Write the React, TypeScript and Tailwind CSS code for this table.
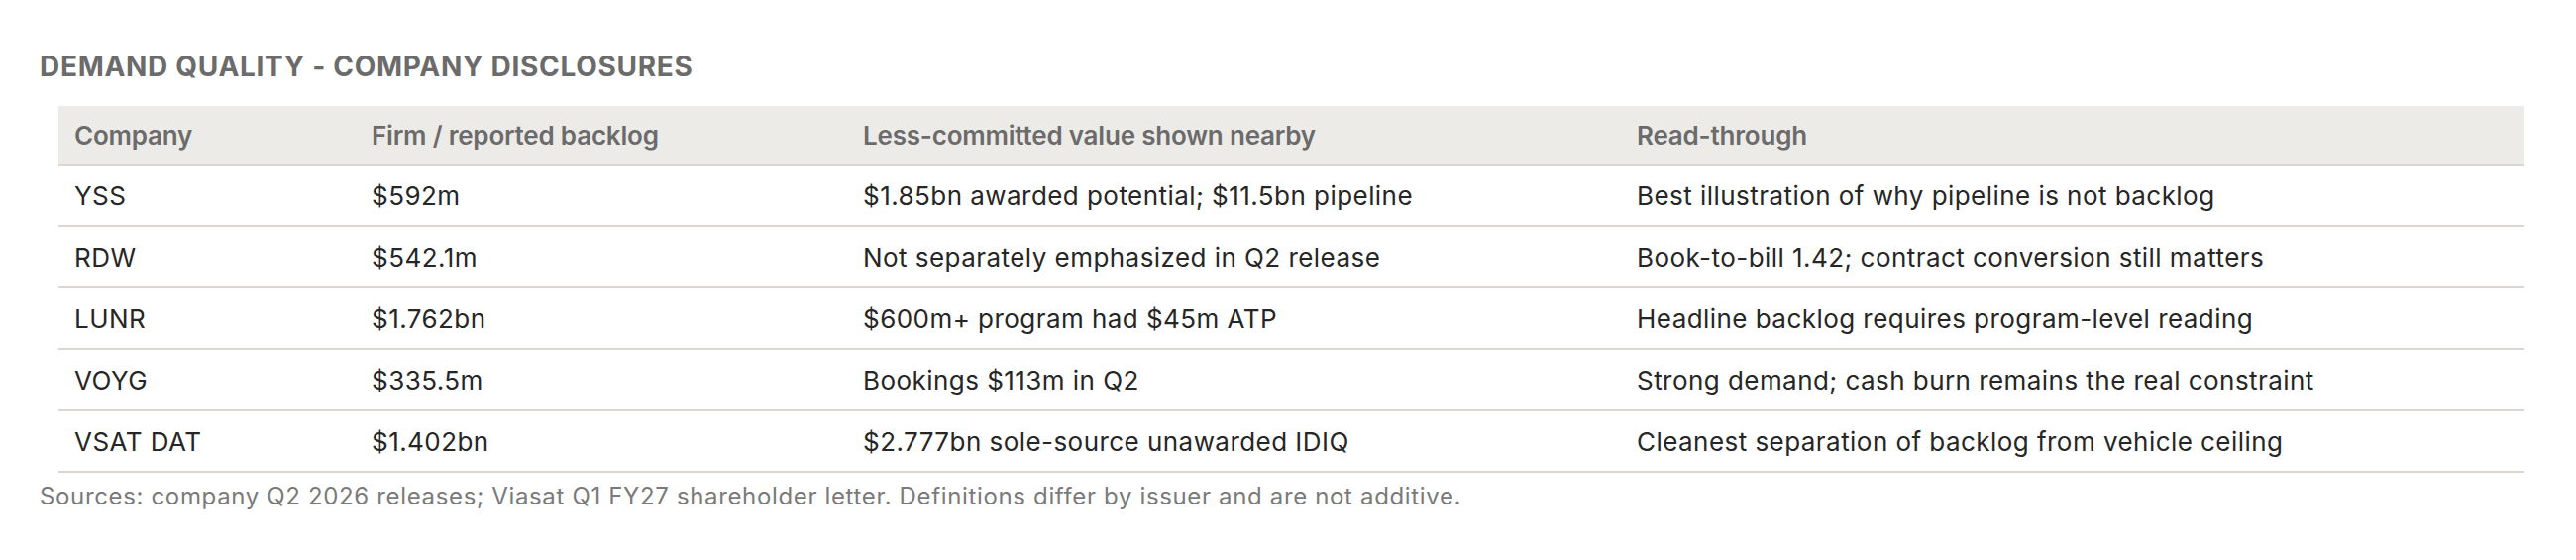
const rows = [
  ["YSS", "$592m", "$1.85bn awarded potential; $11.5bn pipeline", "Best illustration of why pipeline is not backlog"],
  ["RDW", "$542.1m", "Not separately emphasized in Q2 release", "Book-to-bill 1.42; contract conversion still matters"],
  ["LUNR", "$1.762bn", "$600m+ program had $45m ATP", "Headline backlog requires program-level reading"],
  ["VOYG", "$335.5m", "Bookings $113m in Q2", "Strong demand; cash burn remains the real constraint"],
  ["VSAT DAT", "$1.402bn", "$2.777bn sole-source unawarded IDIQ", "Cleanest separation of backlog from vehicle ceiling"],
];

const headers = ["Company", "Firm / reported backlog", "Less-committed value shown nearby", "Read-through"];

export default function App() {
  return (
    <div className="w-[2600px] h-[565px] bg-white pt-[50px] pl-[40px] font-['Inter','Noto_Sans',sans-serif]">
      <h2 className="text-[28px] leading-[34px] font-bold text-[#6b6b6b] tracking-[0.7px]">
        DEMAND QUALITY - COMPANY DISCLOSURES
      </h2>

      <table className="mt-[23px] ml-[19px] w-[2489px] table-fixed border-collapse text-left">
        <colgroup>
          <col className="w-[300px]" />
          <col className="w-[496px]" />
          <col className="w-[781px]" />
          <col className="w-[912px]" />
        </colgroup>
        <thead>
          <tr className="bg-[#edebe8] border-b-2 border-[#dad7d3]">
            {headers.map((h) => (
              <th key={h} className="h-[59px] px-[16px] text-[26px] font-semibold text-[#6b6b6b] tracking-[-0.2px] align-middle">
                {h}
              </th>
            ))}
          </tr>
        </thead>
        <tbody>
          {rows.map((r) => (
            <tr key={r[0]} className="border-b-2 border-[#dad7d3]">
              {r.map((c, i) => (
                <td key={i} className="h-[62px] px-[16px] text-[26px] text-[#262626] tracking-[0.45px] align-middle">
                  {c}
                </td>
              ))}
            </tr>
          ))}
        </tbody>
      </table>

      <p className="mt-[8px] text-[24px] leading-[32px] text-[#7a7a7a] tracking-[0.65px]">
        Sources: company Q2 2026 releases; Viasat Q1 FY27 shareholder letter. Definitions differ by issuer and are not additive.
      </p>
    </div>
  );
}
